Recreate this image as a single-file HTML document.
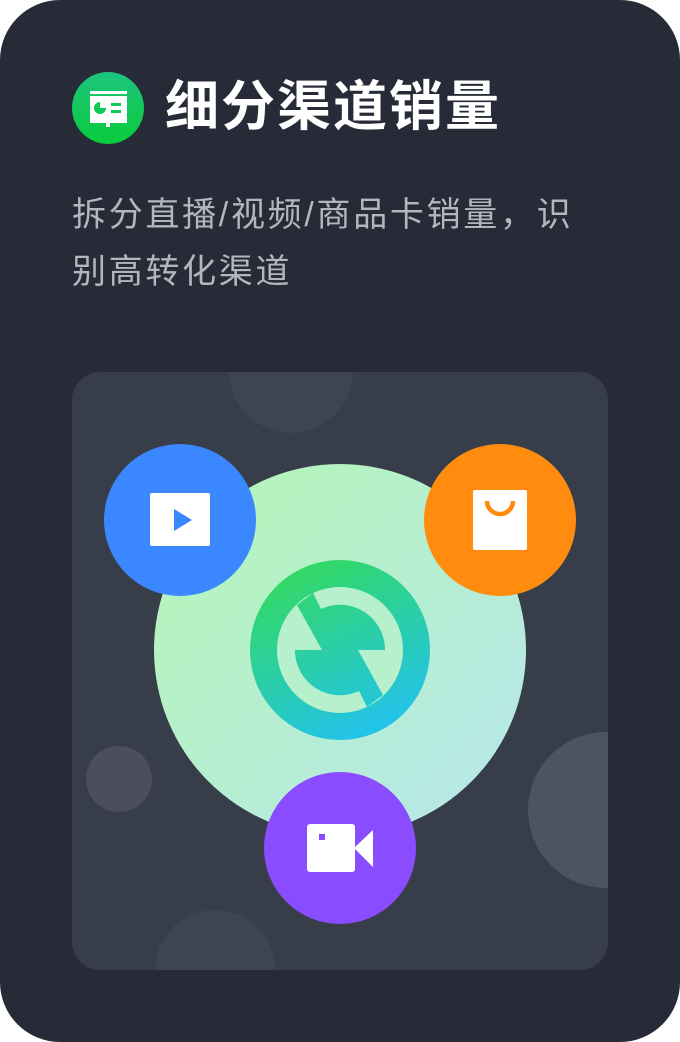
<!DOCTYPE html>
<html><head><meta charset="utf-8"><style>
*{margin:0;padding:0}
body{width:680px;height:1042px;background:#fff;overflow:hidden;font-family:"Liberation Sans","Noto Sans CJK SC",sans-serif}
.card{position:absolute;left:0;top:0;width:680px;height:1042px;background:#262b37;border-radius:60px;overflow:hidden}
.title{position:absolute;left:165px;top:73px;font-size:54px;font-weight:bold;color:#fff;letter-spacing:2px;line-height:68px}
.desc{position:absolute;left:72px;top:187px;white-space:nowrap;font-size:34px;letter-spacing:2.7px;color:#b3b6bd;line-height:57px}
</style></head><body>
<div class="card">
<svg style="position:absolute;left:72px;top:72px" width="72" height="72" viewBox="0 0 72 72">
<defs><linearGradient id="lg" x1="0" y1="0" x2="0" y2="1"><stop offset="0" stop-color="#1ec47f"/><stop offset="1" stop-color="#0acc3a"/></linearGradient></defs>
<circle cx="36" cy="36" r="36" fill="url(#lg)"/>
<rect x="18" y="19" width="37" height="3" fill="#fff"/>
<rect x="18" y="24" width="37" height="27" fill="#fff"/>
<rect x="34" y="50" width="4" height="5" fill="#fff"/>
<path d="M28 30 A6 6 0 1 0 34 36 L28 36Z" fill="#0acc55"/>
<rect x="39" y="31" width="10" height="3" fill="#0acc55"/>
<rect x="39" y="38" width="10" height="3" fill="#0acc55"/>
</svg>
<div class="title">细分渠道销量</div>
<div class="desc">拆分直播/视频/商品卡销量，识<br>别高转化渠道</div>
<svg style="position:absolute;left:0;top:0" width="680" height="1042">
<defs>
<clipPath id="cp"><rect x="72" y="372" width="536" height="598" rx="28"/></clipPath>
<linearGradient id="bg" x1="0" y1="0" x2="1" y2="1"><stop offset="0" stop-color="#b4f7b4"/><stop offset="1" stop-color="#b8e6ee"/></linearGradient>
<linearGradient id="ig" gradientUnits="userSpaceOnUse" x1="300" y1="565" x2="380" y2="735"><stop offset="0" stop-color="#33d963"/><stop offset="1" stop-color="#22c2ee"/></linearGradient>
</defs>
<rect x="72" y="372" width="536" height="598" rx="28" fill="#383d4a"/>
<g clip-path="url(#cp)">
<circle cx="291" cy="371" r="62" fill="#3f4452"/>
<circle cx="119" cy="779" r="33" fill="#4a4f5b"/>
<circle cx="606" cy="810" r="78" fill="#4e5361"/>
<circle cx="215" cy="970" r="60" fill="#3f4452"/>
</g>
<circle cx="340" cy="650" r="186" fill="url(#bg)"/>
<circle cx="340" cy="650" r="90" fill="url(#ig)"/>
<circle cx="340" cy="650" r="63" fill="#b6f0cc"/>
<path d="M297 605 L322 650 L385 650 A45 45 0 0 0 321 609 L313 593Z" fill="url(#ig)"/>
<path d="M383 695 L358 650 L295 650 A45 45 0 0 0 359 691 L367 707Z" fill="url(#ig)"/>
<circle cx="180" cy="520" r="76" fill="#3a87ff"/>
<rect x="150" y="493" width="60" height="53" rx="2" fill="#fff"/>
<path d="M174 509 L192 520 L174 531Z" fill="#3a87ff"/>
<circle cx="500" cy="520" r="76" fill="#ff8c0f"/>
<rect x="473" y="490" width="54" height="60" rx="2" fill="#fff"/>
<path d="M487 501 A13 13 0 0 0 513 501" stroke="#ff8c0f" stroke-width="4.5" fill="none"/>
<circle cx="340" cy="848" r="76" fill="#8a4cff"/>
<rect x="307" y="824" width="48" height="48" rx="3" fill="#fff"/>
<path d="M354 848 L373 830 L373 867Z" fill="#fff"/>
<rect x="319" y="834" width="6" height="6" fill="#8a4cff"/>
</svg>
</div>
</body></html>
